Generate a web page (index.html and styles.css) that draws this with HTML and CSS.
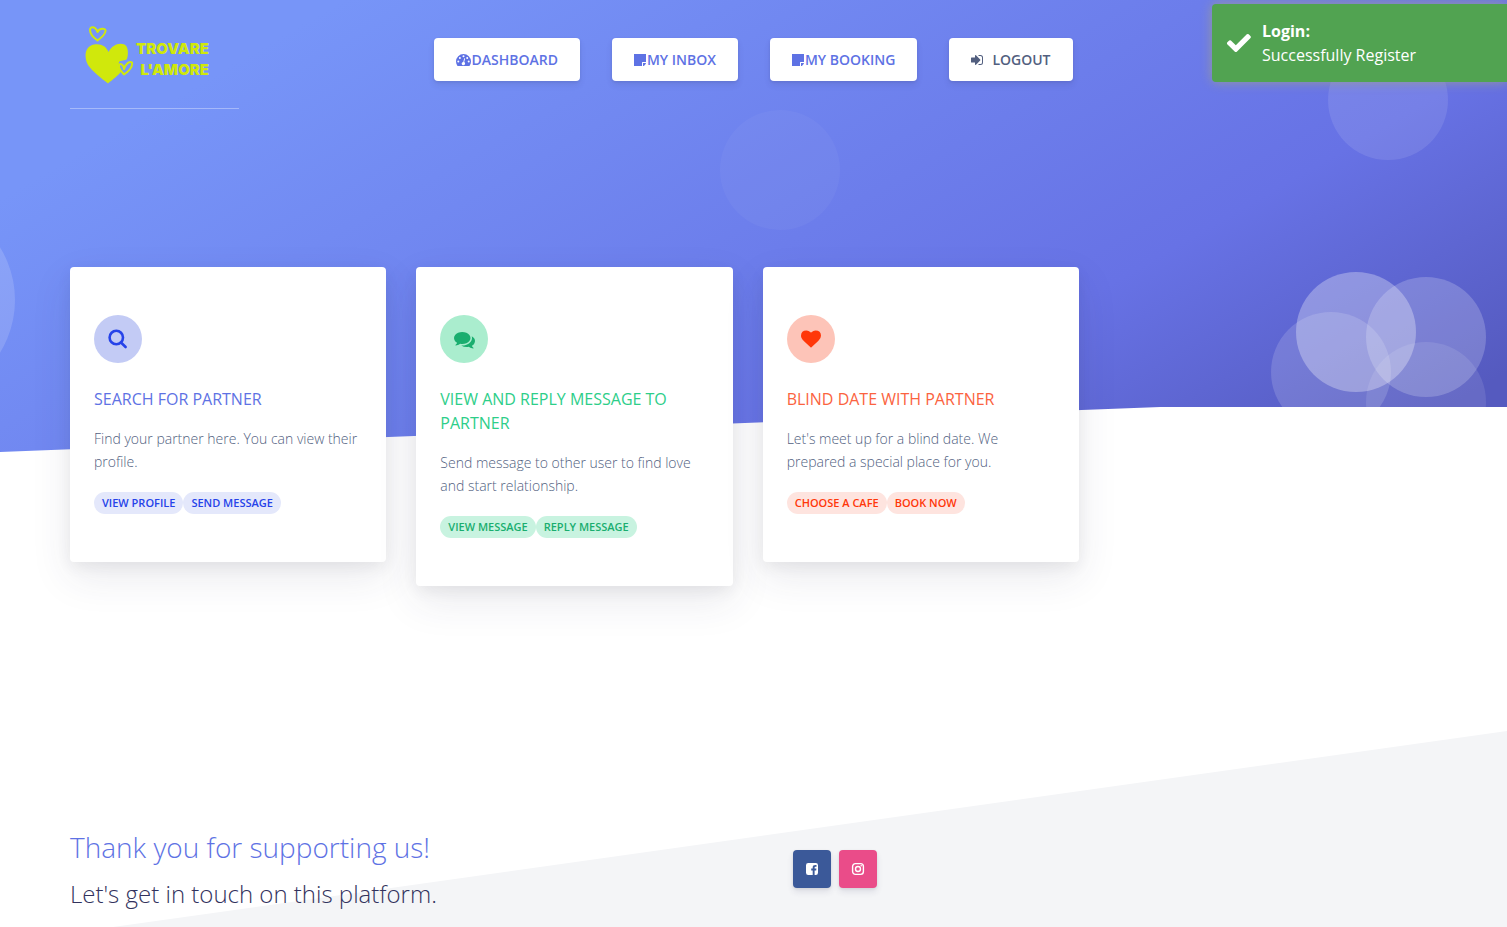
FILE: index.html
```html
<!DOCTYPE html>
<html lang="en">
<head>
<meta charset="utf-8">
<meta name="viewport" content="width=device-width, initial-scale=1">
<title>Trovare L'amore</title>
<link rel="stylesheet" href="styles.css">
</head>
<body>
<div class="page">
  <div class="hero-shape" aria-hidden="true">
    <span class="bubble bubble-1"></span>
    <span class="bubble bubble-2"></span>
    <span class="bubble bubble-3"></span>
    <span class="bubble bubble-4"></span>
    <span class="bubble bubble-5"></span>
    <span class="bubble bubble-6"></span>
    <span class="bubble bubble-7"></span>
  </div>

  <header class="header">
    <a class="brand" href="#">
      <svg class="brand-mark" width="50" height="60" viewBox="0 0 50 60" aria-hidden="true">
        <path fill="#d0e80c" d="M23 57.500C16 52 7 45 3 39C-1.500 31 0 20 9 18.500C16 17.300 21 20 23.500 26C27 19 34 16 39.500 18.500C43.500 20.500 43.500 28 42 33C41 35 35 34 34 36C33 40 36 43 36.500 45C34 49 27 54 23 57.500Z"/>
        <path fill="none" stroke="#d0e80c" stroke-width="2" stroke-linejoin="round" d="M12.500 14.500C9 12 5 8 5 4C5 0 10.500 0 12.500 6C14.500 1.500 21 2 20.500 5C20 9 16 12 12.500 14.500ZM39 48.500C37 46 34 43 34 40C34 37 38 37 39 43C41 37 45 35 47 36.500C48 41 43 46 39 48.500Z"/>
      </svg>
      <span class="brand-name">TROVARE<br>L'AMORE</span>
    </a>
    <nav class="nav">
      <a class="btn" href="#">
        <svg width="15" height="14" viewBox="0 0 15 14" aria-hidden="true"><path fill="currentColor" fill-rule="evenodd" d="M1.500 13C.5 11.500 0 10 0 8.500A7.500 7.500 0 0 1 15 8.500C15 10 14.500 11.500 13.500 13ZM2.300 7.500A1 1 0 1 0 2.300 9.500A1 1 0 1 0 2.300 7.500ZM3.900 3.900A1 1 0 1 0 3.900 5.900A1 1 0 1 0 3.900 3.900ZM7.500 2.300A1 1 0 1 0 7.500 4.300A1 1 0 1 0 7.500 2.300ZM11.200 3.900A1 1 0 1 0 11.200 5.900A1 1 0 1 0 11.200 3.900ZM12.700 7.500A1 1 0 1 0 12.700 9.500A1 1 0 1 0 12.700 7.500ZM8.200 5.300L7.300 8.900A1.700 1.700 0 1 0 8.200 9.100L9.100 5.600Z"/></svg>Dashboard</a>
      <a class="btn" href="#">
        <svg width="13" height="14" viewBox="0 0 13 14" aria-hidden="true"><path fill="currentColor" d="M0 1H12V9H8.500Q8 9 8 9.500V13H0ZM9 10H12Q11.800 11 11.200 11.600L10.400 12.400Q9.800 13 9 13Z"/></svg>My Inbox</a>
      <a class="btn" href="#">
        <svg width="13" height="14" viewBox="0 0 13 14" aria-hidden="true"><path fill="currentColor" d="M0 1H12V9H8.500Q8 9 8 9.500V13H0ZM9 10H12Q11.800 11 11.200 11.600L10.400 12.400Q9.800 13 9 13Z"/></svg>My Booking</a>
      <a class="btn btn-logout" href="#">
        <svg width="13" height="14" viewBox="0 0 13 14" aria-hidden="true"><path fill="currentColor" d="M0 5Q0 4.500 .5 4.500H4V2.500Q4.200 1.700 5 2.200L9.200 6.500Q9.600 7 9.200 7.500L5 11.800Q4.200 12.300 4 11.500V9.500H.5Q0 9.500 0 9ZM7.500 2H9.500Q12 2 12 4.500V9.500Q12 12 9.500 12H7.500V11H9.500Q11 11 11 9.500V4.500Q11 3 9.500 3H7.500Z"/></svg>Logout</a>
    </nav>
  </header>

  <main class="cards">
    <article class="card card-primary">
      <div class="card-icon">
        <svg width="20" height="20" viewBox="0 0 20 20" aria-hidden="true"><g fill="none" stroke="currentColor" stroke-width="2.600" stroke-linecap="round"><circle cx="8.300" cy="8.500" r="6.700"/><path d="M13.500 14L17.600 18"/></g></svg>
      </div>
      <h2 class="card-title">Search for partner</h2>
      <p class="card-text">Find your partner here. You can view their profile.</p>
      <div class="badges"><span class="badge">View profile</span><span class="badge">Send message</span></div>
    </article>
    <article class="card card-success">
      <div class="card-icon">
        <svg width="21" height="21" viewBox="0 0 1792 1792" aria-hidden="true"><path fill="currentColor" d="M1408 768q0 139-94 257t-256.500 186.500-353.500 68.500q-86 0-176-16-124 88-278 128-36 9-86 16h-3q-11 0-20.500-8t-11.500-21q-1-3-1-6.500t.5-6.500 2-6l2.500-5 3.500-5.500 4-5 4.500-5 4-4.500q5-6 23-25t26-29.500 22.500-29 25-38.500 20.500-44q-124-72-195-177t-71-224q0-139 94-257t256.500-186.500 353.500-68.500 353.500 68.500 256.500 186.500 94 257zm384 256q0 120-71 224.500t-195 176.500q10 24 20.500 44t25 38.500 22.500 29 26 29.500 23 25q1 1 4 4.500t4.500 5 4 5 3.500 5.500l2.500 5 2 6 .5 6.500-1 6.500q-3 14-13 22t-22 7q-50-7-86-16-154-40-278-128-90 16-176 16-271 0-472-132 58 4 88 4 161 0 309-45t264-129q125-92 192-212t67-254q0-77-23-152 129 71 204 178t75 230z"/></svg>
      </div>
      <h2 class="card-title">View and reply message to partner</h2>
      <p class="card-text">Send message to other user to find love and start relationship.</p>
      <div class="badges"><span class="badge">View message</span><span class="badge">Reply message</span></div>
    </article>
    <article class="card card-warning">
      <div class="card-icon">
        <svg width="20" height="20" viewBox="0 0 1792 1792" aria-hidden="true"><path fill="currentColor" d="M896 1664q-26 0-44-18l-624-602q-10-8-27.500-26t-55.500-65.500-68-97.500-53.500-121-23.500-138q0-220 127-344t351-124q62 0 126.500 21.500t120 58 95.500 68.500 76 68q36-36 76-68t95.500-68.500 120-58 126.500-21.500q224 0 351 124t127 344q0 221-229 450l-623 600q-18 18-44 18z"/></svg>
      </div>
      <h2 class="card-title">Blind date with partner</h2>
      <p class="card-text">Let's meet up for a blind date. We prepared a special place for you.</p>
      <div class="badges"><span class="badge">Choose a cafe</span><span class="badge">Book now</span></div>
    </article>
  </main>

  <footer class="footer">
    <div class="footer-copy">
      <h3 class="footer-title">Thank you for supporting us!</h3>
      <h4 class="footer-subtitle">Let's get in touch on this platform.</h4>
    </div>
    <div class="social">
      <a class="social-btn facebook" href="#" aria-label="Facebook">
        <svg width="14" height="14" viewBox="0 0 14 14" aria-hidden="true"><path fill="currentColor" d="M3.200 1H10.800Q13 1 13 3.200V10.800Q13 13 10.800 13H9.600V8.400H11.200L11.400 6.600H9.600V5.500Q9.600 4.700 10.400 4.700H11.500V3Q7.700 2.500 7.700 5.200V6.600H6.200V8.400H7.700V13H3.200Q1 13 1 10.800V3.200Q1 1 3.200 1Z"/></svg>
      </a>
      <a class="social-btn instagram" href="#" aria-label="Instagram">
        <svg width="14" height="14" viewBox="0 0 14 14" aria-hidden="true"><rect x="1.600" y="1.600" width="10.800" height="10.800" rx="2.800" fill="none" stroke="currentColor" stroke-width="1.400"/><circle cx="7" cy="7" r="2.500" fill="none" stroke="currentColor" stroke-width="1.400"/><circle cx="10.200" cy="3.800" r=".8" fill="currentColor"/></svg>
      </a>
    </div>
  </footer>

  <div class="toast" role="status">
    <svg width="24" height="24" viewBox="0 0 24 24" aria-hidden="true"><path fill="currentColor" d="M0 13Q-.5 12 .4 11.200L2.200 9.500Q3 9 3.900 9.500L8.800 14.300L19.800 3.300Q20.800 2.600 21.700 3.300L23.600 5.200Q24.200 6.200 23.500 7.100L9.800 20.700Q8.800 21.300 7.900 20.700Z"/></svg>
    <div class="toast-body"><strong>Login:</strong><span>Successfully Register</span></div>
  </div>
</div>
</body>
</html>
```
FILE: styles.css
```css
* {
  box-sizing: border-box;
}

body {
  margin: 0;
  background: #fff;
  color: #525f7f;
  font-family: "Open Sans", sans-serif;
  font-size: 16px;
  line-height: 24px;
}

h2, h3, h4, p {
  margin: 0;
}

a {
  text-decoration: none;
}

svg {
  display: block;
  flex: none;
}

.page {
  position: relative;
  display: flex;
  flex-direction: column;
  min-height: 100vh;
  overflow: hidden;
}

/* Decorative gradient behind the header and cards */
.hero-shape {
  position: absolute;
  inset: 0 0 auto;
  height: 452px;
  overflow: hidden;
  background: linear-gradient(150deg, #7795f8 15%, #6772e5 70%, #555abf 94%);
  clip-path: polygon(0 0, 100% 0, 100% 407px, 77% 407px, 0 100%);
}

.bubble {
  position: absolute;
  width: 120px;
  height: 120px;
  border-radius: 50%;
}

.bubble-1 {
  left: -185px;
  top: 200px;
  width: 200px;
  height: 200px;
  background: rgba(255, 255, 255, .15);
}

.bubble-2 { right: 667px; top: 110px; background: rgba(255, 255, 255, .04); }
.bubble-3 { right: 59px; top: 40px; background: rgba(255, 255, 255, .1); }
.bubble-4 { right: 91px; top: 272px; background: rgba(255, 255, 255, .3); }
.bubble-5 { right: 21px; top: 277px; background: rgba(255, 255, 255, .2); }
.bubble-6 { right: 116px; top: 312px; background: rgba(255, 255, 255, .15); }
.bubble-7 { right: 21px; top: 342px; background: rgba(255, 255, 255, .1); }

.header {
  position: relative;
  display: grid;
  grid-template-columns: 1fr auto 1fr;
  align-items: start;
  padding: 26px 70px 0;
}

.brand {
  display: flex;
  gap: 1px;
  width: 169px;
  height: 83px;
  padding-left: 15px;
  border-bottom: 1px solid rgba(255, 255, 255, .35);
}

.brand-name {
  padding-top: 12px;
  color: #d0e80c;
  font-family: Inter, sans-serif;
  font-size: 15px;
  font-weight: 900;
  line-height: 21px;
  text-align: right;
}

.nav {
  display: flex;
  gap: 32px;
  padding-top: 12px;
}

.btn {
  display: flex;
  align-items: center;
  height: 43px;
  padding: 0 22px;
  border-radius: 4px;
  background: #fff;
  box-shadow: 0 4px 6px rgba(50, 50, 93, .11), 0 1px 3px rgba(0, 0, 0, .08);
  color: #5e72e4;
  font-size: 14px;
  font-weight: 600;
  text-transform: uppercase;
}

.btn-logout {
  gap: 8px;
  color: #525f7f;
}

.cards {
  position: relative;
  display: grid;
  grid-template-columns: repeat(3, 1fr);
  align-items: start;
  gap: 30px;
  max-width: 1149px;
  padding: 158px 70px 0;
}

.card {
  padding: 48px 24px;
  border-radius: 4px;
  background: #fff;
  box-shadow: 0 15px 40px rgba(50, 50, 93, .1), 0 5px 15px rgba(0, 0, 0, .06);
}

.card-icon {
  display: flex;
  align-items: center;
  justify-content: center;
  width: 48px;
  height: 48px;
  margin-bottom: 24px;
  border-radius: 50%;
}

.card-title {
  font-size: 16px;
  font-weight: 400;
  line-height: 24px;
  text-transform: uppercase;
}

.card-text {
  margin-top: 16px;
  font-size: 14px;
  font-weight: 300;
  line-height: 23px;
}

.badges {
  display: flex;
  margin-top: 19px;
}

.badge {
  padding: 0 8px;
  border-radius: 11px;
  font-size: 11px;
  font-weight: 600;
  line-height: 22px;
  text-transform: uppercase;
  white-space: nowrap;
}

.card-primary .card-title { color: #5e72e4; }
.card-primary .card-icon { background: #c3cbf5; color: #2643e9; }
.card-primary .badge { background: #e4e8fb; color: #2643e9; }
.card-success .card-title { color: #2dce89; }
.card-success .card-icon { background: #aaedce; color: #1aae6f; }
.card-success .badge { background: #c8f3e0; color: #1aae6f; }
.card-warning .card-title { color: #fb6340; }
.card-warning .card-icon { background: #fdc4b8; color: #ff3709; }
.card-warning .badge { background: #fee4df; color: #ff3709; }

.footer {
  position: relative;
  display: grid;
  grid-template-columns: 1fr 1fr;
  flex: 1;
  margin-top: 145px;
  padding: 95px 70px 12px;
}

.footer::before {
  content: "";
  position: absolute;
  inset: 0;
  z-index: -1;
  background: #f4f5f7;
  clip-path: polygon(100% 0, 100% 100%, 7.5% 100%);
}

.footer-title {
  color: #5e72e4;
  font-size: 28px;
  font-weight: 300;
  line-height: 42px;
}

.footer-subtitle {
  margin-top: 8px;
  color: #32325d;
  font-size: 24px;
  font-weight: 300;
  line-height: 36px;
}

.social {
  display: flex;
  align-items: flex-start;
  gap: 8px;
  padding: 24px 0 0 39px;
}

.social-btn {
  display: flex;
  align-items: center;
  justify-content: center;
  width: 38px;
  height: 38px;
  border-radius: 4px;
  box-shadow: 0 4px 6px rgba(50, 50, 93, .11), 0 1px 3px rgba(0, 0, 0, .08);
  color: #fff;
}

.facebook { background: #3b5999; }
.instagram { background: #ea4c89; }

.toast {
  position: absolute;
  top: 4px;
  right: 0;
  display: flex;
  align-items: center;
  gap: 11px;
  width: 295px;
  padding: 15px;
  border-radius: 4px 0 0 4px;
  background: #51a351;
  box-shadow: 0 0 12px #999;
  color: #fff;
}

.toast-body {
  display: flex;
  flex-direction: column;
}
```
